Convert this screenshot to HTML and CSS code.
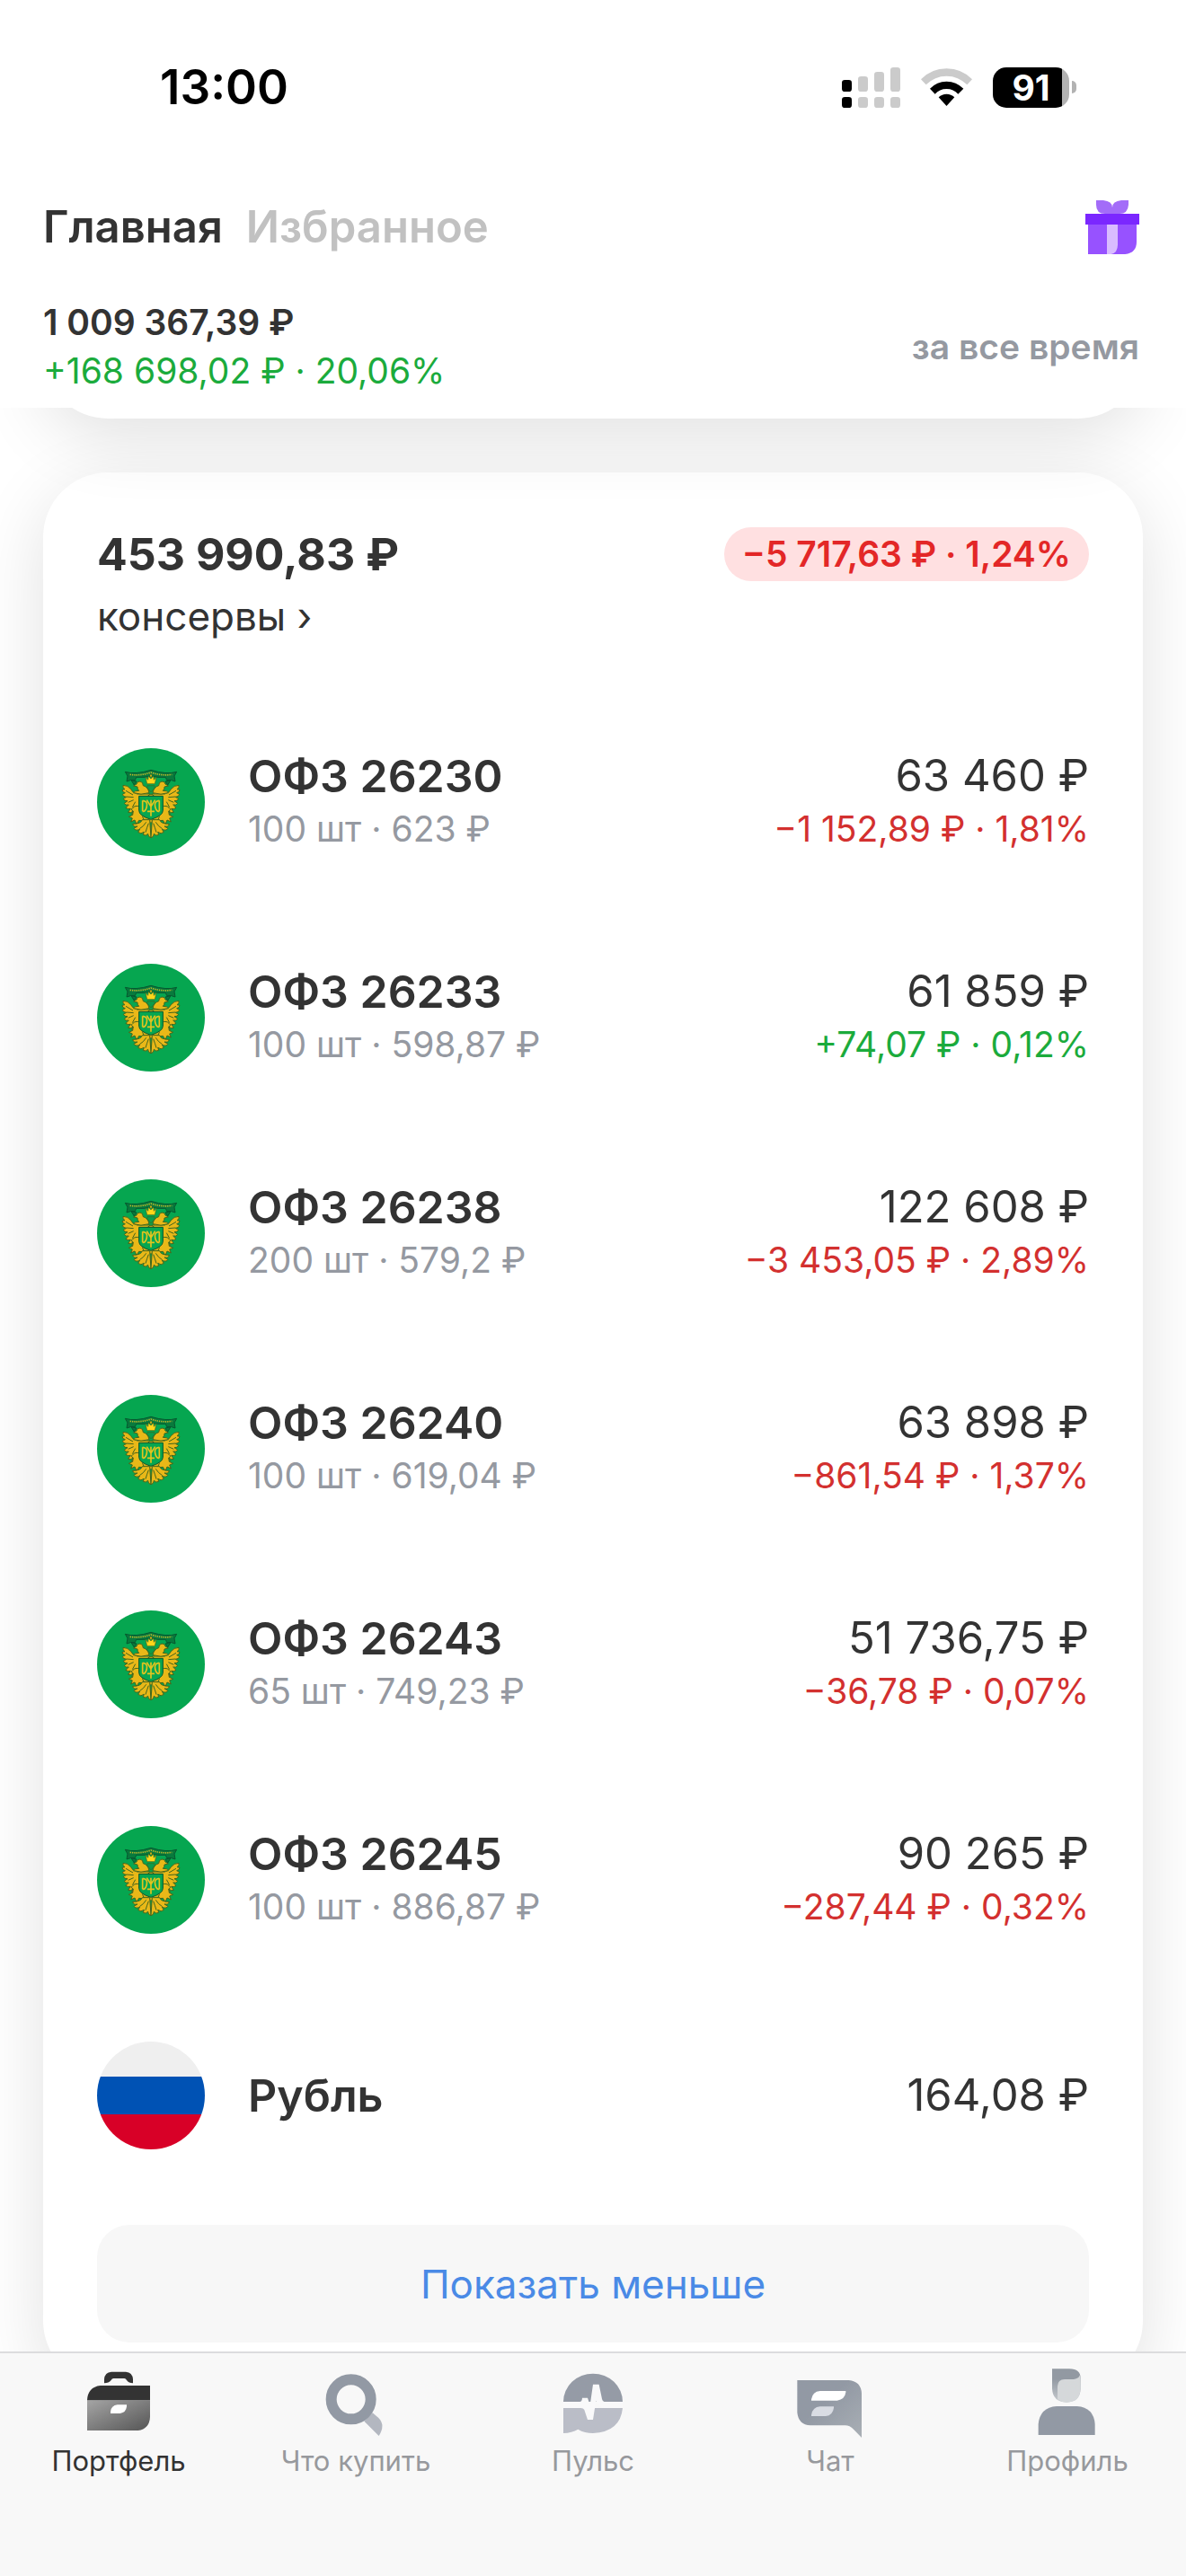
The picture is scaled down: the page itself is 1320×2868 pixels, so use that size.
FILE: index.html
```html
<!DOCTYPE html>
<html lang="ru">
<head>
<meta charset="utf-8">
<meta name="viewport" content="width=device-width">
<title>Портфель</title>
<link rel="stylesheet" href="styles.css">
</head>
<body>
<svg class="sprite" aria-hidden="true">
  <symbol id="ministry" viewBox="54 69 360 360">
    <circle cx="234" cy="249" r="180" fill="#06a650"/>
    <g fill="#087a3d" stroke="#07572f" stroke-width="3">
      <path d="M148 148q34 10 86-6 52 16 86 6l-8 14 3 18q-14-7-28-4l-4-10q-30 2-49-4-19 6-49 4l-4 10q-14-3-28 4l3-18z"/>
      <path d="M168 176l18 4-8 12zM300 176l-18 4 8 12z"/>
    </g>
    <path d="M164 157q34 5 70-7 36 12 70 7" fill="none" stroke="#c2b62a" stroke-width="5" stroke-dasharray="4 3"/>
    <path d="M188 224h92v56q-2 24-46 38-44-14-46-38z" fill="#d9b01a" stroke="#43651c" stroke-width="2"/>
    <g id="eagle-half" fill="#e9b818" stroke="#43651c" stroke-width="3">
      <path d="M232 222l-44 0q-15-3-22-17-9-12-25-12-3 8 6 13l-9 2q0 8 10 10l-9 5q1 8 13 9l-10 6q3 8 14 7l-11 8q4 8 15 5l-10 10q6 6 16 3l-8 12q8 4 16-3l-4 11q10 2 17-6 10-8 14-38z"/>
      <path d="M228 218q-4-20-20-24 0-12-10-14-11-1-12 9l-10 6 13 3q-1 8 5 13-15-1-18 7 24 9 52 0z"/>
      <path d="M199 264q-19-5-25 4l-6 6 7 5-2 13-13 6 12 5-5 12 13-6 6 14 8-13 18 2-6-14 12-12q-18-10-19-22z"/>
      <path d="M230 308l4 60q-10-2-10-13-7 9-16 3l3-9q-11 9-20 0l6-9q-14 6-20-3l12-7q-14 3-16-8 28 0 32-14z"/>
      <path d="M218 316q-8 14-22 22M226 320q-6 16-10 30" fill="none"/>
      <path d="M150 211l24 14M152 231l24 2M158 250l18-8M172 266l10-18" fill="none"/>
    </g>
    <use href="#eagle-half" transform="translate(468 0) scale(-1 1)"/>
    <path d="M216 166l8 9 2-13 8 9 8-9 2 13 8-9-5 22h-26zM231 157h6v8h-6z" fill="#ffd61a" stroke="#43651c" stroke-width="2"/>
    <path d="M222 194h24v8l-12 14-12-14z" fill="#0b9c4c" stroke="#43651c" stroke-width="2"/>
    <path d="M194 229h80v48q0 18-40 30-40-12-40-30z" fill="#06a650" stroke="#07572f" stroke-width="3"/>
    <path d="M206 244v36M206 244q18 2 14 20t-14 16M262 244v36M262 244q-18 2-14 20t14 16M220 242l14 22 14-22M234 242v54M222 280h24" fill="none" stroke="#e3c41e" stroke-width="5"/>
  </symbol>
  <symbol id="flag" viewBox="0 0 120 120">
    <clipPath id="flag-clip"><circle cx="60" cy="60" r="60"/></clipPath>
    <g clip-path="url(#flag-clip)">
      <rect width="120" height="40" fill="#efefef"/>
      <rect y="39" width="120" height="42" fill="#0052b4"/>
      <rect y="81" width="120" height="39" fill="#d80027"/>
    </g>
  </symbol>
</svg>

<header class="header">
  <div class="status">
    <time class="clock">13:00</time>
    <div class="indicators">
      <svg class="signal" viewBox="51 42 195 135" role="img" aria-label="Сигнал сети">
        <g fill="#cbcbcb">
          <rect x="105" y="72" width="33" height="51" rx="10"/><rect x="159" y="57" width="33" height="66" rx="10"/><rect x="213" y="42" width="33" height="81" rx="10"/>
          <rect x="105" y="141" width="33" height="36" rx="10"/><rect x="159" y="141" width="33" height="36" rx="10"/><rect x="213" y="141" width="33" height="36" rx="10"/>
        </g>
        <rect x="51" y="84" width="33" height="39" rx="10"/><rect x="51" y="141" width="33" height="36" rx="10"/>
      </svg>
      <svg class="wifi" viewBox="315 45 171 126" role="img" aria-label="Wi-Fi">
        <path d="M315 82Q350 46 400.500 46T486 82L469 100Q440 71 400.500 71T332 100Z" fill="#cbcbcb"/>
        <path d="M345 113Q368 89 400.500 89T457 113L439 131Q424 114 400.500 114T362 131Z"/>
        <path d="M374 142Q385 131 400.500 131T427 142L400.500 171Z"/>
      </svg>
      <div class="battery"><span class="battery-level">91</span><span class="battery-tip"></span></div>
    </div>
  </div>
  <div class="topbar">
    <div class="tabs">
      <button class="tab tab-active" type="button">Главная</button>
      <button class="tab" type="button">Избранное</button>
    </div>
    <button class="gift" type="button" aria-label="Подарки">
      <svg viewBox="48 39 180 180">
        <path d="M84 39h24q30 3 30 24 0-21 30-24h24v15q-2 30-30 30h-48q-30 0-30-30z" fill="#a36cf8"/>
        <path d="M57 110h162v67q0 38-38 42H57z" fill="#9752ff"/>
        <path d="M120 119h36v68q0 28-22 32h-14z" fill="#d9bcff"/>
        <path d="M48 84h180v36H48z" fill="#7b27ff"/>
      </svg>
    </button>
  </div>
  <div class="summary">
    <div>
      <p class="summary-total">1 009 367,39 ₽</p>
      <p class="gain">+168 698,02 ₽ · 20,06%</p>
    </div>
    <button class="period" type="button">за все время</button>
  </div>
</header>

<main class="content">
  <section class="card card-previous" aria-hidden="true"></section>
  <section class="card">
    <div class="card-head">
      <h1 class="card-total">453 990,83 ₽</h1>
      <span class="pill">−5 717,63 ₽ · 1,24%</span>
    </div>
    <a class="card-name" href="#account">консервы ›</a>
    <ul class="assets">
      <li class="asset">
        <svg class="asset-logo"><use href="#ministry"/></svg>
        <div><p class="asset-name">ОФЗ 26230</p><p class="asset-note">100 шт · 623 ₽</p></div>
        <div class="asset-value"><p class="asset-price">63 460 ₽</p><p class="asset-note loss">−1 152,89 ₽ · 1,81%</p></div>
      </li>
      <li class="asset">
        <svg class="asset-logo"><use href="#ministry"/></svg>
        <div><p class="asset-name">ОФЗ 26233</p><p class="asset-note">100 шт · 598,87 ₽</p></div>
        <div class="asset-value"><p class="asset-price">61 859 ₽</p><p class="asset-note gain">+74,07 ₽ · 0,12%</p></div>
      </li>
      <li class="asset">
        <svg class="asset-logo"><use href="#ministry"/></svg>
        <div><p class="asset-name">ОФЗ 26238</p><p class="asset-note">200 шт · 579,2 ₽</p></div>
        <div class="asset-value"><p class="asset-price">122 608 ₽</p><p class="asset-note loss">−3 453,05 ₽ · 2,89%</p></div>
      </li>
      <li class="asset">
        <svg class="asset-logo"><use href="#ministry"/></svg>
        <div><p class="asset-name">ОФЗ 26240</p><p class="asset-note">100 шт · 619,04 ₽</p></div>
        <div class="asset-value"><p class="asset-price">63 898 ₽</p><p class="asset-note loss">−861,54 ₽ · 1,37%</p></div>
      </li>
      <li class="asset">
        <svg class="asset-logo"><use href="#ministry"/></svg>
        <div><p class="asset-name">ОФЗ 26243</p><p class="asset-note">65 шт · 749,23 ₽</p></div>
        <div class="asset-value"><p class="asset-price">51 736,75 ₽</p><p class="asset-note loss">−36,78 ₽ · 0,07%</p></div>
      </li>
      <li class="asset">
        <svg class="asset-logo"><use href="#ministry"/></svg>
        <div><p class="asset-name">ОФЗ 26245</p><p class="asset-note">100 шт · 886,87 ₽</p></div>
        <div class="asset-value"><p class="asset-price">90 265 ₽</p><p class="asset-note loss">−287,44 ₽ · 0,32%</p></div>
      </li>
      <li class="asset">
        <svg class="asset-logo"><use href="#flag"/></svg>
        <p class="asset-name">Рубль</p>
        <p class="asset-price">164,08 ₽</p>
      </li>
    </ul>
    <button class="less" type="button">Показать меньше</button>
  </section>
</main>

<nav class="tabbar">
  <a class="nav-item nav-active" href="#portfolio">
    <svg class="nav-icon" viewBox="276 132 240 240">
      <linearGradient id="case-fill" x1="0" y1="0" x2="1" y2="1"><stop offset="0" stop-color="#a5a5a5"/><stop offset="1" stop-color="#555"/></linearGradient>
      <path d="M291 247h210v56q-2 40-40 45H291z" fill="url(#case-fill)"/>
      <path d="M291 247q2-44 44-49h166v49z" fill="#333"/>
      <path d="M348 190v-14q2-22 24-24h48q22 2 24 24v14q-14 0-21-10-3-6-8-6h-36q-5 0-8 6-8 10-23 10z" fill="#333"/>
      <path d="M369 291v-6q2-20 23-23h31v6q-2 20-22 23z" fill="#fff"/>
    </svg>
    <span>Портфель</span>
  </a>
  <a class="nav-item" href="#buy">
    <svg class="nav-icon" viewBox="1068 132 240 240">
      <path d="M1216 317l28-28 20 17q24 24 1 60z" fill="#b3b7c0"/>
      <circle cx="1172" cy="244" r="66" fill="none" stroke="#9299a4" stroke-width="36"/>
    </svg>
    <span>Что купить</span>
  </a>
  <a class="nav-item" href="#pulse">
    <svg class="nav-icon" viewBox="540 132 240 240">
      <path d="M561 252a99 94 0 0 1 198 0z" fill="#959ba6"/>
      <path d="M561 273h198q-8 80-99 84-28 0-50-13-20 12-49 13z" fill="#babdc7"/>
      <path d="M561 252h55q7 0 8-13h18l8 25 10-70h20l10 48q2 10 12 10h57v21h-62q-18 0-27-24l-10 63h-18l-11-33q-3-6-12-6h-58z" fill="#f9f9fa"/>
    </svg>
    <span>Пульс</span>
  </a>
  <a class="nav-item" href="#chat">
    <svg class="nav-icon" viewBox="132 132 240 240">
      <linearGradient id="chat-fill" x1="0" y1="0" x2="1" y2="1"><stop offset=".4" stop-color="#9299a4"/><stop offset="1" stop-color="#a9afb5"/></linearGradient>
      <path d="M142 180h172q41 4 43 44v148l-27-28q-13-13-28-13H186q-40-2-44-43z" fill="url(#chat-fill)"/>
      <path d="M189 248v-4q4-26 29-28h86v4q-3 25-29 28z" fill="#fff"/>
      <path d="M189 300v-4q4-26 29-28h46v4q-3 25-27 28z" fill="#d9dce3"/>
    </svg>
    <span>Чат</span>
  </a>
  <a class="nav-item" href="#profile">
    <svg class="nav-icon" viewBox="924 132 240 240">
      <linearGradient id="hair-fill" x1="0" y1="0" x2="0" y2="1"><stop offset=".3" stop-color="#9299a2"/><stop offset="1" stop-color="#c7cbcf"/></linearGradient>
      <path d="M993 142h58q37 0 37 32v34q-2 46-47 46-46-1-48-46z" fill="url(#hair-fill)"/>
      <path d="M1011 244v-44q1-22 24-23h30q19-3 20-14l3 10v35q-2 46-47 46-17-1-30-10z" fill="#d5d8da"/>
      <path d="M947 363v-36q5-56 61-60h68q56 4 60 60v36z" fill="#9299a4"/>
    </svg>
    <span>Профиль</span>
  </a>
</nav>
</body>
</html>
```
FILE: styles.css
```css
* {
  box-sizing: border-box;
}

body {
  display: flex;
  flex-direction: column;
  height: 100vh;
  margin: 0;
  background: #fff;
  color: #333;
  font-family: Inter, "Noto Sans", sans-serif;
  font-size: 39px;
  line-height: 54px;
}

p,
h1,
ul {
  margin: 0;
  padding: 0;
}

ul {
  list-style: none;
}

a {
  color: inherit;
  text-decoration: none;
}

button {
  padding: 0;
  border: 0;
  background: none;
  color: inherit;
  font: inherit;
}

svg {
  display: block;
}

.sprite {
  position: absolute;
  width: 0;
  height: 0;
}

/* Header */

.header {
  flex: none;
  padding-bottom: 14px;
}

.status {
  display: flex;
  align-items: center;
  justify-content: space-between;
  height: 194px;
  padding: 0 122px 0 178px;
  color: #000;
}

.clock {
  font-size: 53px;
  font-weight: 600;
}

.indicators {
  display: flex;
  align-items: center;
  gap: 23px;
}

.signal {
  width: 65px;
  height: 45px;
}

.wifi {
  width: 57px;
  height: 42px;
}

.battery {
  display: flex;
  align-items: center;
  gap: 3px;
}

.battery-level {
  width: 85px;
  border-radius: 15px;
  background: linear-gradient(to right, #000 77px, #b2b2b2 77px);
  color: #fff;
  font-size: 39px;
  font-weight: 700;
  line-height: 45px;
  text-align: center;
}

.battery-tip {
  width: 5px;
  height: 14px;
  border-radius: 0 5px 5px 0;
  background: #b2b2b2;
}

.topbar {
  display: flex;
  align-items: center;
  justify-content: space-between;
  height: 118px;
  padding: 0 52px 0 48px;
}

.tabs {
  display: flex;
  gap: 26px;
}

.tab {
  color: #c1c1c1;
  font-size: 49px;
  font-weight: 600;
}

.tab-active {
  color: #333;
}

.gift svg {
  width: 60px;
  height: 60px;
}

.summary {
  display: flex;
  align-items: center;
  justify-content: space-between;
  padding: 20px 52px 0 48px;
}

.summary-total {
  font-weight: 600;
}

.period {
  color: #9599a1;
  font-weight: 600;
}

.gain {
  color: #1bab3c;
}

.loss {
  color: #d3302f;
}

/* Cards */

.content {
  display: flex;
  flex: 1;
  flex-direction: column;
  gap: 60px;
  min-height: 0;
  padding: 0 48px;
  overflow: hidden auto;
  scrollbar-width: none;
}

.card {
  flex: none;
  padding: 61px 60px 48px;
  border-radius: 72px;
  background: #fff;
  box-shadow: 0 20px 80px rgba(0, 0, 0, 0.12);
}

.card-previous {
  z-index: 1;
  height: 240px;
  margin-top: -228px;
}

.card-head {
  display: flex;
  align-items: center;
  justify-content: space-between;
}

.card-total {
  font-size: 50px;
  font-weight: 700;
  line-height: 60px;
}

.pill {
  padding: 0 20px;
  border-radius: 30px;
  background: #ffe0e1;
  color: #e32727;
  font-weight: 600;
  line-height: 60px;
}

.card-name {
  display: block;
  font-size: 44px;
  line-height: 78px;
}

.assets {
  margin: 48px 0 24px;
}

.asset {
  display: grid;
  grid-template-columns: 120px 1fr auto;
  align-items: center;
  gap: 48px;
  height: 240px;
}

.asset-logo {
  width: 120px;
  height: 120px;
}

.asset-name,
.asset-price {
  line-height: 60px;
}

.asset-name {
  font-size: 50px;
  font-weight: 600;
}

.asset-price {
  font-size: 49px;
}

.asset-value {
  text-align: right;
}

.asset-note {
  line-height: 58px;
}

.asset-note:not(.gain, .loss) {
  color: #9599a1;
}

.less {
  display: block;
  width: 100%;
  height: 131px;
  border-radius: 36px;
  background: #f7f7f7;
  color: #4a8ae6;
  font-size: 44px;
}

/* Tab bar */

.tabbar {
  display: grid;
  flex: none;
  grid-template-columns: repeat(5, 1fr);
  height: 250px;
  padding-top: 14px;
  border-top: 2px solid #dcdcde;
  background: #f8f8f8;
}

.nav-item {
  display: flex;
  flex-direction: column;
  align-items: center;
  gap: 6px;
  color: #97999d;
  font-size: 31px;
  line-height: 40px;
}

.nav-active {
  color: #333;
}

.nav-icon {
  width: 80px;
  height: 80px;
}
```
